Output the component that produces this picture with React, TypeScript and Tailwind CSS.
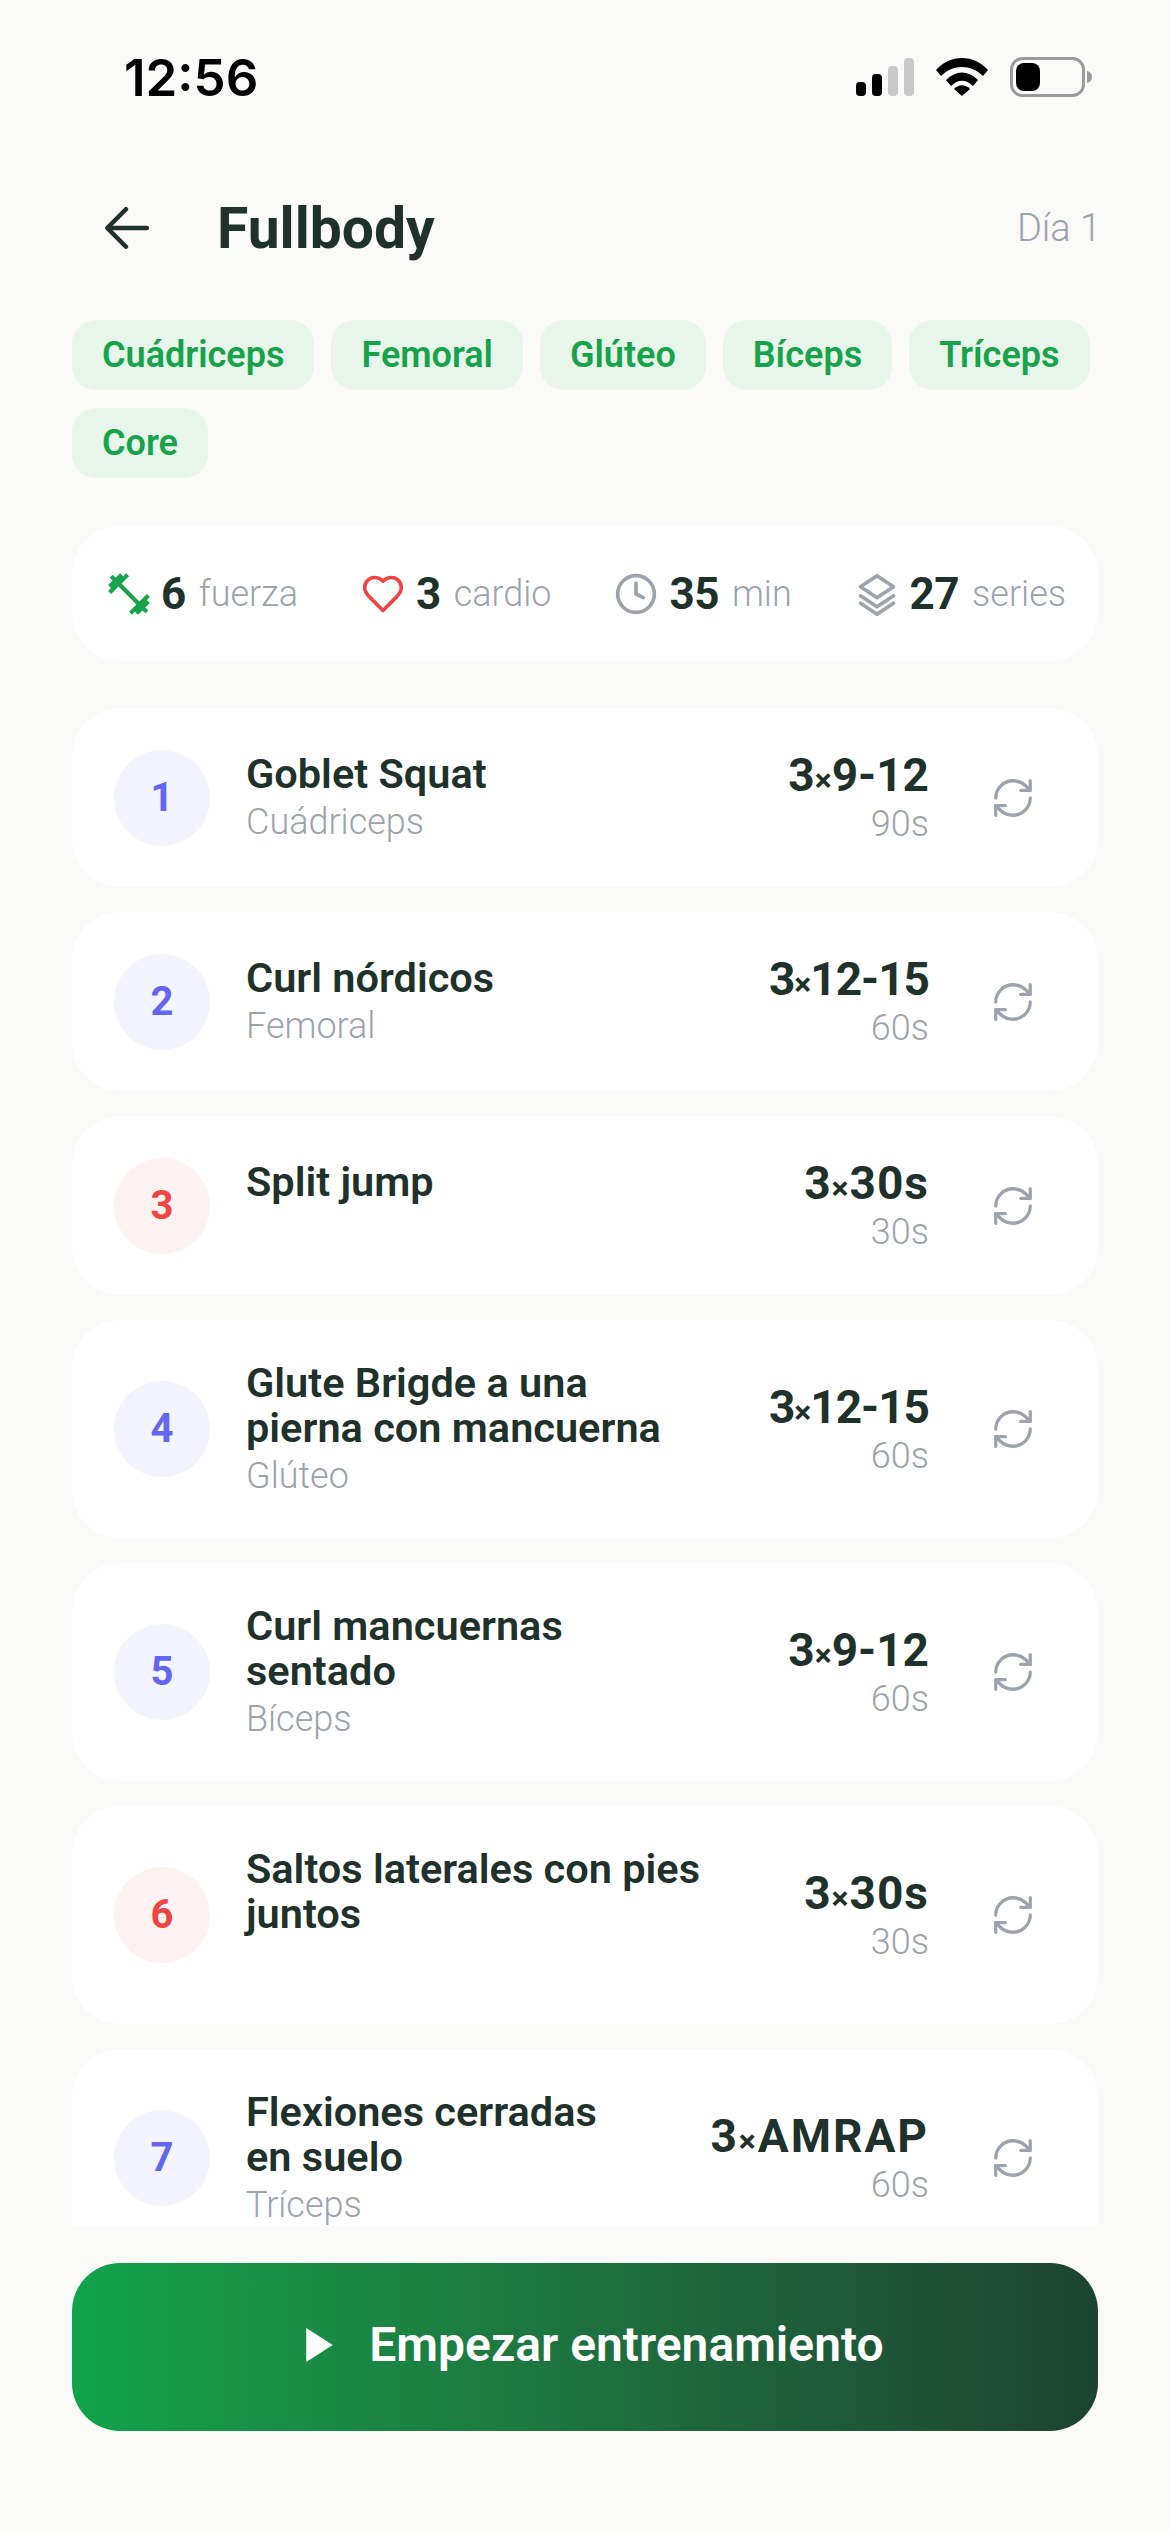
import React from "react";

const dark = "text-[#1f312b]";

function Swap() {
  return (
    <svg viewBox="0 0 24 24" className="w-[46px] h-[46px] text-[#9ca3af]" fill="none" stroke="currentColor" strokeWidth="1.7" strokeLinecap="round" strokeLinejoin="round">
      <path d="M3 12a9 9 0 0 1 9-9 9.75 9.75 0 0 1 6.74 2.74L21 8" />
      <path d="M21 3v5h-5" />
      <path d="M21 12a9 9 0 0 1-9 9 9.75 9.75 0 0 1-6.74-2.74L3 16" />
      <path d="M8 16H3v5" />
    </svg>
  );
}

type Ex = { n: number; lines: string[]; sub: string; reps: string; track: string; rest: string; red?: boolean };
const items: Ex[] = [
  { n: 1, lines: ["Goblet Squat"], sub: "Cuádriceps", reps: "9-12", track: "tracking-[0px]", rest: "90s" },
  { n: 2, lines: ["Curl nórdicos"], sub: "Femoral", reps: "12-15", track: "tracking-[-1px]", rest: "60s" },
  { n: 3, lines: ["Split jump"], sub: "", reps: "30s", track: "tracking-[1px]", rest: "30s", red: true },
  { n: 4, lines: ["Glute Brigde a una", "pierna con mancuerna"], sub: "Glúteo", reps: "12-15", track: "tracking-[-1px]", rest: "60s" },
  { n: 5, lines: ["Curl mancuernas", "sentado"], sub: "Bíceps", reps: "9-12", track: "tracking-[0px]", rest: "60s" },
  { n: 6, lines: ["Saltos laterales con pies", "juntos"], sub: "", reps: "30s", track: "tracking-[1px]", rest: "30s", red: true },
  { n: 7, lines: ["Flexiones cerradas", "en suelo"], sub: "Tríceps", reps: "AMRAP", track: "tracking-[2px]", rest: "60s" },
];

function Stat({ icon, num, label }: { icon: React.ReactNode; num: string; label: string }) {
  return (
    <div className="flex items-center">
      {icon}
      <span className={`ml-[11px] text-[44px] leading-none font-bold tracking-[-0.5px] ${dark}`}>{num}</span>
      <span className="ml-[13px] text-[36px] leading-none font-light text-[#9ca3af]">{label}</span>
    </div>
  );
}

export default function App() {
  return (
    <div className="w-[1170px] h-[2532px] bg-[#fafaf8] flex flex-col overflow-hidden font-['Roboto',sans-serif]">
      {/* status bar */}
      <div className="h-[184px] shrink-0 pl-[124px] pr-[78px] flex items-start justify-between pt-[52px]">
        <span className="text-[51px] leading-[52px] font-semibold text-black font-['Inter',sans-serif]">12:56</span>
        <div className="flex items-center pt-[5px] gap-[22px]">
          <svg width="58" height="38" viewBox="0 0 58 38">
            <rect x="0" y="24" width="10" height="14" rx="4" fill="#000" />
            <rect x="16" y="16" width="10" height="22" rx="4" fill="#000" />
            <rect x="32" y="8" width="10" height="30" rx="4" fill="#c9c9c9" />
            <rect x="48" y="0" width="10" height="38" rx="4" fill="#c9c9c9" />
          </svg>
          <svg width="52" height="38" viewBox="0 0 52 38">
            <path d="M0 12 C14 -4 38 -4 52 12 L47 18 C35 6 17 6 5 18Z" fill="#000" />
            <path d="M10 22 C20 12 32 12 42 22 L37 28 C30 21 22 21 15 28Z" fill="#000" />
            <path d="M18 31 C23 26 29 26 34 31 L26 38Z" fill="#000" />
          </svg>
          <svg width="82" height="40" viewBox="0 0 82 40">
            <rect x="1.5" y="1.5" width="72" height="37" rx="11" fill="none" stroke="#9a9a9a" strokeWidth="3" />
            <rect x="6" y="6" width="24" height="28" rx="8" fill="#000" />
            <path d="M77 14 C81 15 82 18 82 20 C82 22 81 25 77 26Z" fill="#9a9a9a" />
          </svg>
        </div>
      </div>

      {/* header */}
      <div className="h-[88px] shrink-0 pl-[72px] pr-[69px] flex items-center justify-between">
        <div className="flex items-center">
          <svg viewBox="0 0 48 48" className="w-[50px] h-[50px] ml-[29px] text-[#1f312b]" fill="none" stroke="currentColor" strokeWidth="4.4" strokeLinecap="round" strokeLinejoin="round">
            <path d="M44 24H8" />
            <path d="M24 6 6 24l18 18" />
          </svg>
          <h1 className={`ml-[66px] text-[57px] leading-none font-bold ${dark}`}>Fullbody</h1>
        </div>
        <span className="text-[38px] leading-none font-light text-[#9ca3af]">Día 1</span>
      </div>

      {/* chips */}
      <div className="mt-[48px] px-[72px] shrink-0 flex flex-wrap gap-x-[17px] gap-y-[18px]">
        {["Cuádriceps", "Femoral", "Glúteo", "Bíceps", "Tríceps", "Core"].map((c) => (
          <span key={c} className="h-[70px] px-[30px] rounded-[24px] bg-[#e8f5ea] flex items-center text-[36px] font-semibold text-[#16a34a]">
            {c}
          </span>
        ))}
      </div>

      {/* stats */}
      <div className="mt-[48px] mx-[72px] h-[135px] shrink-0 rounded-[48px] bg-white pl-[36px] pr-[32px] flex items-center justify-between">
        <Stat
          icon={
            <svg viewBox="0 0 24 24" className="w-[50px] h-[50px] -mx-[4px] text-[#16a34a]" fill="currentColor">
              <path d="M20.57 14.86L22 13.43 20.57 12 17 15.57 8.43 7 12 3.43 10.57 2 9.14 3.43 7.71 2 5.57 4.14 4.14 2.71 2.71 4.14l1.43 1.43L2 7.71l1.43 1.43L2 10.57 3.43 12 7 8.43 15.57 17 12 20.57 13.43 22l1.43-1.43L16.29 22l2.14-2.14 1.43 1.43 1.43-1.43-1.43-1.43L22 16.29z" />
            </svg>
          }
          num="6"
          label="fuerza"
        />
        <Stat
          icon={
            <svg viewBox="0 0 24 24" className="w-[44px] h-[44px] text-[#ef4444]" fill="none" stroke="currentColor" strokeWidth="2" strokeLinecap="round" strokeLinejoin="round">
              <path d="M19 14c1.49-1.46 3-3.21 3-5.5A5.5 5.5 0 0 0 16.5 3c-1.76 0-3 .5-4.5 2-1.5-1.5-2.74-2-4.5-2A5.5 5.5 0 0 0 2 8.5c0 2.3 1.5 4.05 3 5.5l7 7Z" />
            </svg>
          }
          num="3"
          label="cardio"
        />
        <Stat
          icon={
            <svg viewBox="0 0 24 24" className="w-[44px] h-[44px] text-[#9ca3af]" fill="none" stroke="currentColor" strokeWidth="2" strokeLinecap="round" strokeLinejoin="round">
              <circle cx="12" cy="12" r="10" />
              <path d="M12 6v6l4 2" />
            </svg>
          }
          num="35"
          label="min"
        />
        <Stat
          icon={
            <svg viewBox="0 0 24 24" className="w-[44px] h-[44px] text-[#9ca3af]" fill="none" stroke="currentColor" strokeWidth="2" strokeLinecap="round" strokeLinejoin="round">
              <path d="M12 2 3 8l9 6 9-6-9-6Z" />
              <path d="m3 13 9 6 9-6" />
              <path d="m3 17 9 6 9-6" />
            </svg>
          }
          num="27"
          label="series"
        />
      </div>

      {/* list */}
      <div className="mt-[47px] mx-[72px] h-[1518px] shrink-0 overflow-hidden flex flex-col gap-[25px]">
        {items.map((it) => (
          <div key={it.n} className="shrink-0 rounded-[48px] bg-white pl-[42px] pr-[62px] py-[40px] flex items-center">
            <div className={`w-[96px] h-[96px] shrink-0 rounded-full flex items-center justify-center text-[40px] font-bold ${it.red ? "bg-[#fef2f2] text-[#ef4444]" : "bg-[#f3f4ff] text-[#6366f1]"}`}>
              {it.n}
            </div>
            <div className="ml-[36px] flex-1 min-w-0">
              <div className={`text-[41.5px] leading-[45px] font-semibold ${dark}`}>
                {it.lines.map((l) => (
                  <div key={l}>{l}</div>
                ))}
              </div>
              <div className="h-[48px] text-[36px] leading-[52px] font-light text-[#9ca3af] overflow-visible">{it.sub}</div>
            </div>
            <div className="shrink-0 text-right mr-[2px]">
              <div className={`text-[46px] leading-[54px] h-[54px] font-bold ${it.track} ${dark}`}>
                3<span className="text-[32px] leading-none">×</span>
                {it.reps}
              </div>
              <div className="text-[36px] leading-[45px] font-light text-[#9ca3af]">{it.rest}</div>
            </div>
            <div className="ml-[59px] shrink-0">
              <Swap />
            </div>
          </div>
        ))}
      </div>

      {/* CTA */}
      <div className="mt-[37px] mx-[72px] h-[168px] shrink-0 rounded-[48px] bg-gradient-to-r from-[#10a34a] to-[#1c4331] flex items-center justify-center pl-[20px] pb-[4px]">
        <svg viewBox="0 0 28 36" className="w-[27px] h-[34px] text-white" fill="currentColor">
          <path d="M0 0 28 18 0 36Z" />
        </svg>
        <span className="ml-[36px] text-[48px] leading-none font-semibold text-white">Empezar entrenamiento</span>
      </div>
    </div>
  );
}
